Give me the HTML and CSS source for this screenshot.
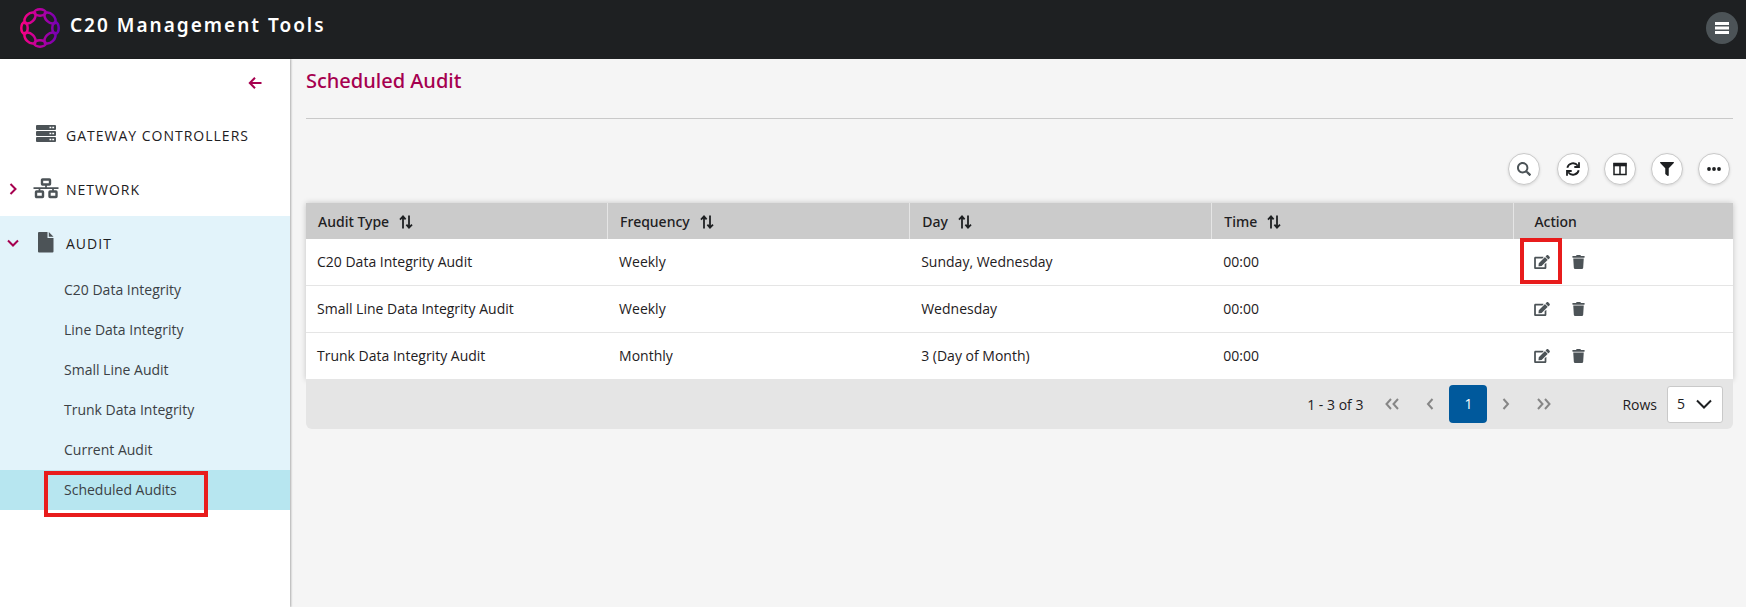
FILE: index.html
```html
<!DOCTYPE html>
<html lang="en">
<head>
<meta charset="utf-8">
<title>C20 Management Tools</title>
<meta name="viewport" content="width=device-width, initial-scale=1">
<link rel="stylesheet" href="styles.css">
</head>
<body>
<svg class="defs" aria-hidden="true">
  <defs>
    <symbol id="i-sort" viewBox="0 0 14 14"><path d="M4 13.5V2M1 4.6 4 1.4l2.600 3M10 .5V12M7.400 9.600l2.600 3 3-3" fill="none" stroke="currentColor" stroke-width="1.800"/></symbol>
    <symbol id="i-edit" viewBox="0 0 576 512"><path fill="currentColor" d="M402.6 83.2l90.2 90.2c3.8 3.8 3.8 10 0 13.8L274.4 405.6l-92.8 10.3c-12.4 1.4-22.9-9.1-21.5-21.5l10.3-92.8L388.8 83.2c3.8-3.8 10-3.8 13.8 0zm162-22.9l-48.8-48.8c-15.2-15.2-39.9-15.2-55.2 0l-35.4 35.4c-3.8 3.8-3.8 10 0 13.8l90.2 90.2c3.8 3.8 10 3.8 13.8 0l35.4-35.4c15.2-15.3 15.2-40 0-55.2zM384 346.2V448H64V128h229.8c3.2 0 6.2-1.3 8.5-3.5l40-40c7.6-7.6 2.2-20.5-8.5-20.5H48C21.5 64 0 85.5 0 112v352c0 26.5 21.5 48 48 48h352c26.5 0 48-21.5 48-48V306.2c0-10.7-12.9-16-20.5-8.5l-40 40c-2.2 2.3-3.5 5.3-3.5 8.5z"/></symbol>
    <symbol id="i-trash" viewBox="0 0 448 512"><path fill="currentColor" d="M432 32H312l-9.4-18.7A24 24 0 0 0 281.1 0H166.8a23.72 23.72 0 0 0-21.4 13.3L136 32H16A16 16 0 0 0 0 48v32a16 16 0 0 0 16 16h416a16 16 0 0 0 16-16V48a16 16 0 0 0-16-16zM32 128l21 339a48 48 0 0 0 48 45h246a48 48 0 0 0 48-45l21-339z"/></symbol>
    <linearGradient id="ring" gradientUnits="userSpaceOnUse" x1="0" y1="0" x2="40" y2="0"><stop offset="0" stop-color="#ff0080"/><stop offset=".5" stop-color="#b800a0"/><stop offset="1" stop-color="#6a00b4"/></linearGradient>
  </defs>
</svg>

<header class="topbar">
  <svg class="logo" viewBox="0 0 40 40" role="img" aria-label="Logo">
    <g fill="none" stroke="url(#ring)" stroke-width="2.500">
      <ellipse cx="20" cy="4.500" rx="5.800" ry="3.200"/>
      <ellipse cx="20" cy="35.500" rx="5.800" ry="3.200"/>
      <ellipse cx="4.500" cy="20" rx="3.200" ry="5.800"/>
      <ellipse cx="35.500" cy="20" rx="3.200" ry="5.800"/>
      <path d="M4.900 15.100C2.800 9.400 9.400 2.800 15.100 4.900 17.200 10.600 10.600 17.200 4.900 15.100z"/>
      <path d="M35.100 15.100C37.200 9.400 30.600 2.800 24.900 4.900 22.800 10.600 29.400 17.200 35.100 15.100z"/>
      <path d="M4.900 24.900C2.800 30.600 9.400 37.200 15.100 35.100 17.200 29.400 10.600 22.800 4.900 24.900z"/>
      <path d="M35.100 24.900C37.200 30.600 30.600 37.200 24.900 35.100 22.800 29.400 29.400 22.800 35.100 24.900z"/>
    </g>
  </svg>
  <span class="brand">C20 Management Tools</span>
  <button class="menu-button" type="button" aria-label="Menu">
    <svg viewBox="0 0 14 12" width="14" height="12"><path d="M0 0h14v3H0zM0 4.500h14v3H0zM0 9h14v3H0z" fill="#fff"/></svg>
  </button>
</header>

<div class="shell">
  <nav class="sidebar" aria-label="Main">
    <div class="collapse-row">
      <button class="collapse" type="button" aria-label="Collapse menu">
        <svg viewBox="0 0 14 12" width="14" height="12"><path d="M13.500 6H1.800M7 .8 1.800 6 7 11.200" fill="none" stroke="currentColor" stroke-width="2"/></svg>
      </button>
    </div>
    <button class="group" type="button">
      <span class="twisty"></span>
      <svg class="group-icon" viewBox="0 0 26 22"><g fill="#4c5357"><rect x="3" y="1" width="20" height="5" rx="1"/><rect x="3" y="7" width="20" height="5" rx="1"/><rect x="3" y="13" width="20" height="5" rx="1"/></g><path d="M16.500 3.500h1.800m1 0h1.800M16.500 9.500h1.800m1 0h1.800M16.500 15.500h1.800m1 0h1.800" stroke="#fff" stroke-width="1.500"/></svg>
      <span class="group-name">GATEWAY CONTROLLERS</span>
    </button>
    <button class="group" type="button" aria-expanded="false">
      <span class="twisty"><svg viewBox="0 0 12 12" width="12" height="12"><path d="M3.500 1 8.500 6l-5 5" fill="none" stroke="currentColor" stroke-width="2"/></svg></span>
      <svg class="group-icon" viewBox="0 0 26 22"><g fill="none" stroke="#4c5357" stroke-width="2.400"><rect x="9" y="1.500" width="8" height="5" rx=".5"/><rect x="3" y="13.500" width="7" height="5.500" rx=".5"/><rect x="16.500" y="13.500" width="7" height="5.500" rx=".5"/><path d="M.5 10.200h25M13 6.500v3.500M6.500 10v3M20 10v3" stroke-width="1.700"/></g></svg>
      <span class="group-name">NETWORK</span>
    </button>
    <div class="open-group">
      <button class="group" type="button" aria-expanded="true">
        <span class="twisty"><svg viewBox="0 0 12 12" width="12" height="12"><path d="M1 3.500l5 5 5-5" fill="none" stroke="currentColor" stroke-width="2"/></svg></span>
        <svg class="group-icon" viewBox="0 0 26 22"><path d="M6 0h8.500v6h6V19.500a1 1 0 0 1-1 1H6a1 1 0 0 1-1-1V1a1 1 0 0 1 1-1zM15.800 0l4.700 4.700h-4.700z" fill="#4c5357"/></svg>
        <span class="group-name">AUDIT</span>
      </button>
      <ul class="links">
        <li><a href="#">C20 Data Integrity</a></li>
        <li><a href="#">Line Data Integrity</a></li>
        <li><a href="#">Small Line Audit</a></li>
        <li><a href="#">Trunk Data Integrity</a></li>
        <li><a href="#">Current Audit</a></li>
        <li><a class="current" href="#" aria-current="page">Scheduled Audits<span class="mark mark-link"></span></a></li>
      </ul>
    </div>
  </nav>

  <main class="content">
    <h1>Scheduled Audit</h1>
    <div class="tools">
      <button class="round search" type="button" aria-label="Search"><svg viewBox="0 0 512 512" width="14" height="14"><path fill="#4c5357" d="M505 442.700L405.300 343c-4.500-4.500-10.600-7-17-7H372c27.600-35.300 44-79.700 44-128C416 93.100 322.900 0 208 0S0 93.100 0 208s93.100 208 208 208c48.300 0 92.700-16.400 128-44v16.300c0 6.400 2.500 12.500 7 17l99.700 99.700c9.400 9.400 24.600 9.400 33.900 0l28.300-28.300c9.400-9.400 9.400-24.600.1-34zM208 346c-76 0-138-62-138-138S132 70 208 70s138 62 138 138-62 138-138 138z"/></svg></button>
      <button class="round" type="button" aria-label="Refresh"><svg viewBox="0 0 14 14" width="14" height="14"><path d="M1.300 5.800A5.900 5.900 0 0 1 11.800 3.700M12.700 8.200A5.900 5.900 0 0 1 2.200 10.300M13 .3V5H8.300M1 13.700V9h4.700" fill="none" stroke="#1e2022" stroke-width="1.800"/></svg></button>
      <button class="round" type="button" aria-label="Columns"><svg viewBox="0 0 14 14" width="14" height="14"><path d="M1 1.500h12v11H1z M7 3v9" fill="none" stroke="#1e2022" stroke-width="1.500"/><path d="M.5 1h13v3.300H.5z" fill="#1e2022"/></svg></button>
      <button class="round" type="button" aria-label="Filter"><svg viewBox="0 0 512 512" width="14" height="14"><path fill="#1e2022" d="M487.976 0H24.028C2.710 0-8.047 25.866 7.058 40.971L192 225.941V432c0 7.831 3.821 15.170 10.237 19.662l80 55.980C298.020 518.690 320 507.493 320 487.980V225.941l184.947-184.970C520.021 25.896 509.338 0 487.976 0z"/></svg></button>
      <button class="round" type="button" aria-label="More"><svg viewBox="0 0 14 14" width="14" height="14"><g fill="#1e2022"><circle cx="2" cy="7" r="1.900"/><circle cx="7" cy="7" r="1.900"/><circle cx="12" cy="7" r="1.900"/></g></svg></button>
    </div>

    <table class="grid">
      <thead>
        <tr>
          <th scope="col">Audit Type<svg class="sort"><use href="#i-sort"/></svg></th>
          <th scope="col">Frequency<svg class="sort"><use href="#i-sort"/></svg></th>
          <th scope="col">Day<svg class="sort"><use href="#i-sort"/></svg></th>
          <th scope="col">Time<svg class="sort"><use href="#i-sort"/></svg></th>
          <th scope="col" class="action-head">Action</th>
        </tr>
      </thead>
      <tbody>
        <tr>
          <td>C20 Data Integrity Audit</td><td>Weekly</td><td>Sunday, Wednesday</td><td>00:00</td>
          <td><div class="actions"><button type="button" aria-label="Edit"><svg class="edit"><use href="#i-edit"/></svg><span class="mark mark-edit"></span></button><button type="button" aria-label="Delete"><svg class="trash"><use href="#i-trash"/></svg></button></div></td>
        </tr>
        <tr>
          <td>Small Line Data Integrity Audit</td><td>Weekly</td><td>Wednesday</td><td>00:00</td>
          <td><div class="actions"><button type="button" aria-label="Edit"><svg class="edit"><use href="#i-edit"/></svg></button><button type="button" aria-label="Delete"><svg class="trash"><use href="#i-trash"/></svg></button></div></td>
        </tr>
        <tr>
          <td>Trunk Data Integrity Audit</td><td>Monthly</td><td>3 (Day of Month)</td><td>00:00</td>
          <td><div class="actions"><button type="button" aria-label="Edit"><svg class="edit"><use href="#i-edit"/></svg></button><button type="button" aria-label="Delete"><svg class="trash"><use href="#i-trash"/></svg></button></div></td>
        </tr>
      </tbody>
    </table>

    <div class="pager">
      <span class="range">1 - 3 of 3</span>
      <div class="pages">
        <button type="button" aria-label="First page"><svg viewBox="0 0 14 12" width="14" height="12"><path d="M6 1 1.500 6 6 11M13 1 8.500 6l4.500 5"/></svg></button>
        <button type="button" aria-label="Previous page"><svg viewBox="0 0 8 12" width="8" height="12"><path d="M6.500 1 2 6l4.500 5"/></svg></button>
        <button type="button" class="page-current" aria-current="page">1</button>
        <button type="button" aria-label="Next page"><svg viewBox="0 0 8 12" width="8" height="12"><path d="M1.500 1 6 6l-4.500 5"/></svg></button>
        <button type="button" aria-label="Last page"><svg viewBox="0 0 14 12" width="14" height="12"><path d="M1 1l4.500 5L1 11M8 1l4.500 5L8 11"/></svg></button>
      </div>
      <label class="rows-label" for="rows">Rows</label>
      <div class="rows">
        <select id="rows"><option selected>5</option><option>10</option><option>20</option></select>
        <svg class="rows-arrow" viewBox="0 0 16 10"><path d="M1 1.500l7 7 7-7" fill="none" stroke="#1e2022" stroke-width="2"/></svg>
      </div>
    </div>
  </main>
</div>
</body>
</html>
```
FILE: styles.css
```css
* { box-sizing: border-box; }

body {
  margin: 0;
  min-height: 100vh;
  display: flex;
  flex-direction: column;
  background: #f5f5f5;
  color: #1e2022;
  font: 14px/20px "Open Sans", "Noto Sans", sans-serif;
}

button {
  padding: 0;
  border: 0;
  background: none;
  color: inherit;
  font: inherit;
  cursor: pointer;
}

svg { display: block; }
.defs { position: absolute; width: 0; height: 0; }

.topbar {
  display: flex;
  align-items: center;
  height: 59px;
  padding: 0 8px 4px 20px;
  background: #1e2022;
}
.logo { width: 40px; height: 40px; }
.brand {
  margin-left: 10px;
  padding-bottom: 5px;
  color: #fff;
  font-family: "Noto Sans", "Open Sans", sans-serif;
  font-size: 19px;
  line-height: 28px;
  font-weight: 600;
  letter-spacing: 2px;
}
.menu-button {
  display: grid;
  place-items: center;
  width: 32px;
  height: 32px;
  margin-left: auto;
  border-radius: 50%;
  background: #4c5357;
}

.shell { display: flex; flex: 1; }

.sidebar {
  flex: none;
  width: 290px;
  background: #fff;
  box-shadow: 1px 0 2px rgba(0, 0, 0, .3);
}
.collapse-row {
  display: flex;
  justify-content: flex-end;
  padding: 18px 28px 19px 0;
}
.collapse { color: #a6004f; }
.group {
  display: flex;
  align-items: center;
  width: 100%;
  height: 54px;
  padding-left: 7px;
  letter-spacing: 1px;
}
.group-name { padding-top: 2px; }
.twisty { width: 26px; color: #a6004f; }
.group-icon { width: 26px; height: 22px; margin-right: 7px; }
.open-group { background: #e2f3fa; }
.links { margin: 0; padding: 0; list-style: none; }
.links a {
  position: relative;
  display: block;
  padding: 10px 0 10px 64px;
  color: #3b4145;
  text-decoration: none;
}
.links .current { background: #b7e6f0; }

.mark {
  position: absolute;
  border: 4px solid #e81c1c;
  pointer-events: none;
}
.mark-link { left: 44px; top: 1px; width: 164px; height: 46px; }
.mark-edit { left: -14px; top: -17px; width: 42px; height: 46px; }

.content { flex: 1; min-width: 0; padding: 8px 13px 0 16px; }
h1 {
  margin: 0 0 34px;
  padding-bottom: 23px;
  border-bottom: 1px solid #c9c9c9;
  color: #a6004f;
  font-family: "Noto Sans", "Open Sans", sans-serif;
  font-size: 20px;
  line-height: 28px;
  font-weight: 500;
}

.tools {
  display: flex;
  justify-content: flex-end;
  gap: 15px;
  padding-right: 3px;
  margin-bottom: 18px;
}
.round {
  display: grid;
  place-items: center;
  width: 32px;
  height: 32px;
  border: 1px solid #c9c9c9;
  border-radius: 50%;
  background: #fff;
  box-shadow: 0 1px 3px rgba(0, 0, 0, .12);
}
.search { margin-right: 2px; }

.grid {
  width: 100%;
  table-layout: fixed;
  border-spacing: 0;
  background: #fff;
  box-shadow: 0 0 6px rgba(0, 0, 0, .2);
}
.grid th {
  width: 21.17%;
  height: 36px;
  padding: 2px 12px 0;
  border-right: 1px solid #e5e5e5;
  background: #cbcbcb;
  font-family: "Noto Sans", "Open Sans", sans-serif;
  font-weight: 500;
  text-align: left;
}
.grid .action-head { width: auto; padding-left: 20px; border-right: 0; }
.grid td {
  height: 47px;
  padding: 0 11px;
  border-bottom: 1px solid #e5e5e5;
}
.sort { display: inline-block; width: 14px; height: 14px; margin-left: 10px; vertical-align: -2px; }
.actions {
  display: flex;
  align-items: center;
  gap: 22px;
  padding-left: 9px;
  color: #4c5357;
}
.actions button { position: relative; }
.edit { width: 16px; height: 14px; }
.trash { width: 13px; height: 14px; }

.pager {
  display: flex;
  align-items: center;
  justify-content: flex-end;
  padding: 5px 10px 6px;
  border-radius: 0 0 6px 6px;
  background: #e5e5e5;
}
.range { margin-right: 10px; padding-top: 2px; }
.pages { display: flex; }
.pages button {
  display: grid;
  place-items: center;
  width: 38px;
  height: 38px;
}
.pages svg { fill: none; stroke: #868686; stroke-width: 2; }
.pages .page-current {
  border-radius: 4px;
  background: #00599c;
  color: #fff;
}
.rows-label { margin: 0 10px 0 59px; padding-top: 2px; }
.rows { position: relative; }
.rows select {
  appearance: none;
  width: 56px;
  height: 37px;
  padding: 0 9px;
  border: 1px solid #c9c9c9;
  border-radius: 3px;
  background: #fff;
  color: inherit;
  font: inherit;
}
.rows-arrow {
  position: absolute;
  right: 11px;
  top: 13px;
  width: 16px;
  height: 10px;
  pointer-events: none;
}
```
